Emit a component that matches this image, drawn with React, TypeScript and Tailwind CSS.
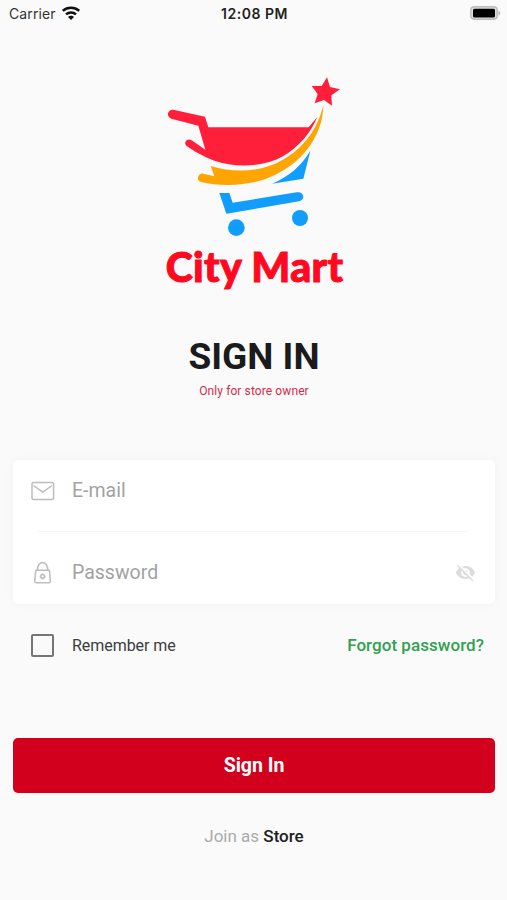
function StatusBar() {
  return (
    <header className="grid h-7 grid-cols-3 items-center pl-[9px] pr-[6px] font-['Inter',sans-serif] text-[14px] leading-7 text-[#222]">
      <div className="flex items-center gap-[6px]">
        <span className="tracking-[0.1px] text-[#333]">Carrier</span>
        <svg viewBox="0 0 18 14" className="-mt-[2px] h-[14px] w-[18px]" fill="none" stroke="#111" strokeWidth="2.6">
          <path d="M.8 4.9C5.2.6 12.8.6 17.2 4.9" />
          <path d="M4 8.4c2.8-2.6 7.2-2.6 10 0" />
          <path d="M9 14 6 11c1.5-1.6 4.5-1.6 6 0z" fill="#111" stroke="none" />
        </svg>
      </div>
      <span className="-ml-px text-center font-semibold tracking-[0.5px] whitespace-nowrap">12:08 PM</span>
      <svg viewBox="0 0 31 14" className="-mt-[2px] h-[14px] w-[31px] justify-self-end">
        <rect x=".8" y=".8" width="26.4" height="12.4" rx="3.4" fill="#ddd" stroke="#bbb" strokeWidth="1.4" />
        <rect x="3" y="2.8" width="22" height="8.6" rx="1.5" fill="#000" />
        <path d="M28.5 4.8c2.4.8 2.4 3.8 0 4.6z" fill="#bbb" />
      </svg>
    </header>
  )
}

function Logo() {
  return (
    <div className="flex flex-col items-center pl-px">
      <svg viewBox="0 0 630 540" className="h-[180px] w-[210px]">
        <g fill="#ff1f3a">
          <path d="M531 37 540 66 570 73 544 91 546 122 522 105 494 115 503 87 485 63 515 63Z" />
          <path d="M70 134 165 155 175 187H476L502 156C484 201 448 245 399 274C341 307 256 309 193 287C158 274 131 258 111 244C97 232 113 216 127 227L166 254 145 182 64 161C47 155 53 132 70 134Z" />
        </g>
        <path
          d="M520 120C519 222 444 303 359 337C304 361 218 367 151 350C137 344 145 323 160 326L193 334 182 303C258 326 337 320 397 285C463 249 504 188 520 120Z"
          fill="#ffa502"
        />
        <g fill="#109dfb">
          <path d="M481 257 460 341 366 356C416 335 454 303 481 257Z" />
          <path d="M208 384H238L248 413 440 382C463 379 467 405 447 409L229 446Z" />
          <circle cx="259" cy="488" r="25" />
          <circle cx="450" cy="459" r="24" />
        </g>
      </svg>
      <div className="mt-[-2px] h-[49px] font-['Lato',sans-serif] text-[41px] leading-[48px] font-black tracking-[0.4px] whitespace-nowrap text-[#ff0820] [-webkit-text-stroke:1px_#ff0820]">
        City Mart
      </div>
    </div>
  )
}

function MailIcon() {
  return (
    <svg viewBox="0 0 24 20" className="h-5 w-6" fill="none" stroke="#bdbdbd" strokeWidth="1.5" strokeLinejoin="round">
      <rect x="1" y="1.6" width="21.6" height="16.8" rx="1.5" />
      <path d="m2.5 4.5 9.3 6.7 9.3-6.7" />
    </svg>
  )
}

function LockIcon() {
  return (
    <svg viewBox="0 0 24 24" className="size-6" fill="none" stroke="#bdbdbd" strokeWidth="1.5" strokeLinejoin="round">
      <path d="M4.8 9.2h13.6l1 11c0 1-.5 1.6-1.5 1.6H5.2c-1 0-1.5-.6-1.5-1.6z" />
      <path d="M6.4 9.2C6.4-1 16.8-1 16.8 9.2" />
      <circle cx="11.6" cy="15.4" r="1.9" />
      <path d="M11.6 12.4v1M11.6 17.4v1M8.6 15.4h1M13.6 15.4h1" />
    </svg>
  )
}

function EyeOffIcon() {
  return (
    <svg viewBox="0 0 24 24" className="size-[21px]" fill="#dcdcdc">
      <path d="M12 7c2.76 0 5 2.24 5 5 0 .65-.13 1.26-.36 1.83l2.92 2.92c1.51-1.26 2.7-2.89 3.43-4.75-1.73-4.39-6-7.5-11-7.5-1.4 0-2.74.25-3.98.7l2.16 2.16C10.74 7.13 11.35 7 12 7zM2 4.27l2.28 2.28.46.46C3.08 8.3 1.78 10.02 1 12c1.73 4.39 6 7.5 11 7.5 1.55 0 3.03-.3 4.38-.84l.42.42L19.73 22 21 20.73 3.27 3 2 4.27zM7.53 9.8l1.55 1.55c-.05.21-.08.43-.08.65 0 1.66 1.34 3 3 3 .22 0 .44-.03.65-.08l1.55 1.55c-.67.33-1.41.53-2.2.53-2.76 0-5-2.24-5-5 0-.79.2-1.53.53-2.2zm4.31-.78 3.15 3.15.02-.16c0-1.66-1.34-3-3-3l-.17.01z" />
    </svg>
  )
}

export default function App() {
  return (
    <main className="h-[900px] w-[507px] overflow-hidden bg-[#fafafa] font-['Roboto',sans-serif]">
      <StatusBar />
      <div className="pt-[37px] pr-[12px] pl-[13px]">
        <Logo />
        <div className="mt-[44px] text-center">
          <h1 className="text-[37px] leading-[42px] font-bold text-[#1b1b1d]">SIGN IN</h1>
          <p className="mt-[5px] text-[12px] leading-4 tracking-[0.1px] text-[#d82b4a]">Only for store owner</p>
        </div>

        <section className="mt-[61px] h-[144px] rounded-[5px] bg-white pr-[19px] pl-[18px] shadow-[0_0_8px_rgba(0,0,0,0.04)]">
          <div className="flex h-[61px] items-center">
            <MailIcon />
            <span className="ml-[17px] text-[19.5px] text-[#a2a2a2]">E-mail</span>
          </div>
          <div className="mt-[10px] mr-[8px] ml-[6px] h-px bg-[#f6f6f6]" />
          <div className="flex h-[81px] items-center">
            <LockIcon />
            <span className="ml-[17px] grow text-[19.5px] text-[#a2a2a2]">Password</span>
            <EyeOffIcon />
          </div>
        </section>

        <div className="mt-[29px] flex h-6 items-center pr-[11px] pl-[18px]">
          <span className="size-[23px] rounded-[2px] border-2 border-[#757575]" />
          <span className="ml-[18px] grow pt-px text-[16px] tracking-[-0.05px] text-[#3c3c3e]">Remember me</span>
          <a className="pt-[2px] text-[17px] font-medium tracking-[0.05px] text-[#32a052]">Forgot password?</a>
        </div>

        <button className="mt-[81px] block h-[55px] w-full rounded-[5px] bg-[#d2001c] pt-px text-[19.5px] font-bold text-white">
          Sign In
        </button>
        <p className="mt-[31px] text-center text-[17px] leading-6 text-[#aaa]">
          Join as <span className="font-medium text-[#202022]">Store</span>
        </p>
      </div>
    </main>
  )
}
